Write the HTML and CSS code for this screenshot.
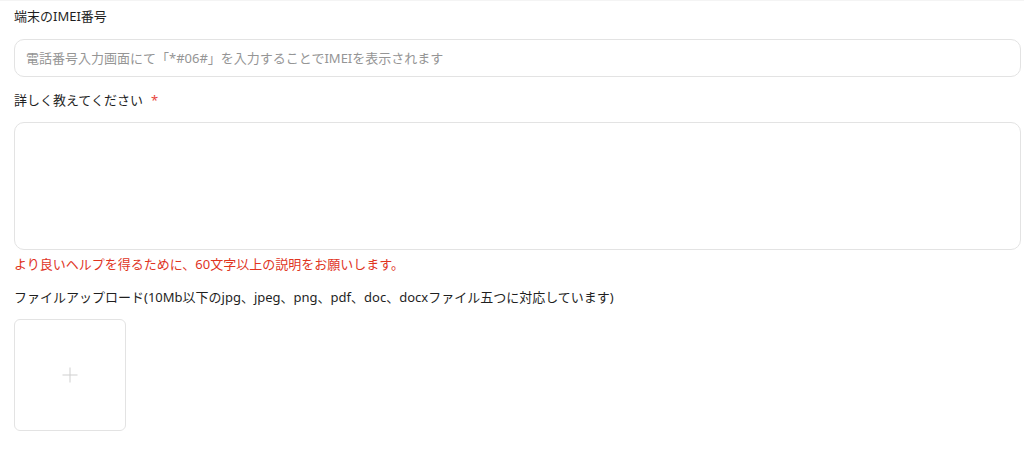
FILE: index.html
```html
<!DOCTYPE html>
<html lang="ja">
<head>
<meta charset="utf-8">
<title>フォーム</title>
<link rel="stylesheet" href="styles.css">
</head>
<body>
<form class="form">
  <div class="group">
    <label class="label">端末のIMEI番号</label>
    <input class="input" type="text" placeholder="電話番号入力画面にて「*#06#」を入力することでIMEIを表示されます">
  </div>
  <div class="group">
    <label class="label">詳しく教えてください<span class="req">*</span></label>
    <textarea class="textarea"></textarea>
    <div class="error">より良いヘルプを得るために、60文字以上の説明をお願いします。</div>
  </div>
  <div class="group">
    <label class="label">ファイルアップロード(10Mb以下のjpg、jpeg、png、pdf、doc、docxファイル五つに対応しています)</label>
    <div class="upload">
      <svg width="16" height="16" viewBox="0 0 16 16" aria-hidden="true"><path d="M8 0.5V15.5M0.5 8H15.5" stroke="#cfcfcf" stroke-width="1" fill="none"/></svg>
    </div>
  </div>
</form>
</body>
</html>
```

FILE: styles.css
```css
html, body {
  margin: 0;
  padding: 0;
  background: #fff;
}
body {
  font-family: "Noto Sans", "Noto Sans CJK JP", sans-serif;
  font-size: 13px;
  color: #1f1f1f;
  border-top: 1px solid #f4f4f4;
}
.form {
  padding: 5px 3px 0 14px;
  display: flex;
  flex-direction: column;
  gap: 13px;
}
.group {
  display: flex;
  flex-direction: column;
}
.label {
  display: block;
  line-height: 20px;
  height: 20px;
  margin-bottom: 12px;
  color: #1f1f1f;
}
.group:first-child .label { margin-bottom: 13px; }
.req {
  color: #e8453c;
  margin-left: 8px;
}
.input {
  box-sizing: border-box;
  width: 100%;
  height: 38px;
  border: 1px solid #e3e3e3;
  border-radius: 10px;
  padding: 0 11px;
  font-family: inherit;
  font-size: 13px;
  color: #222;
  outline: none;
}
.input::placeholder {
  color: #959595;
}
.textarea {
  box-sizing: border-box;
  width: 100%;
  height: 128px;
  border: 1px solid #e3e3e3;
  border-radius: 10px;
  padding: 10px 11px;
  font-family: inherit;
  font-size: 13px;
  resize: none;
  outline: none;
  display: block;
}
.error {
  margin-top: 4px;
  line-height: 20px;
  color: #e0351f;
}
.upload {
  box-sizing: border-box;
  width: 112px;
  height: 112px;
  border: 1px solid #e3e3e3;
  border-radius: 6px;
  display: flex;
  align-items: center;
  justify-content: center;
}
```
